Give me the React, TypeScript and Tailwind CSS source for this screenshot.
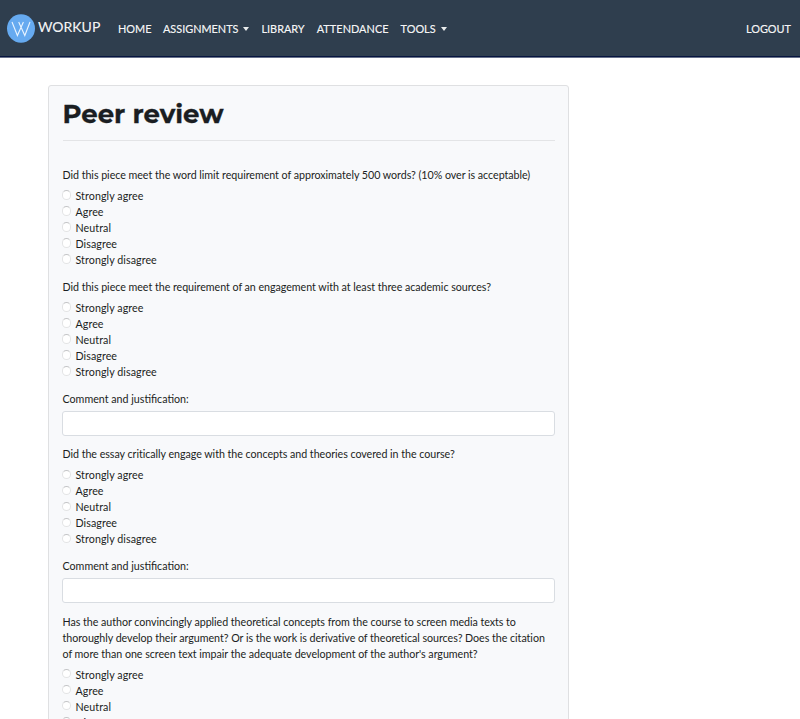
const OPTIONS = ["Strongly agree", "Agree", "Neutral", "Disagree", "Strongly disagree"];

function Caret() {
  return <span className="ml-[5px] inline-block border-x-[3.5px] border-t-[4px] border-x-transparent border-t-white/90 align-[2px]" />;
}

function Question({ lines }: { lines: string[] }) {
  return (
    <fieldset className="mb-[10.6px]">
      <div className="mb-[5px]">
        {lines.map((line) => (
          <p key={line} className="whitespace-nowrap leading-[16px] tracking-[-0.04px]">{line}</p>
        ))}
      </div>
      {OPTIONS.map((option) => (
        <label key={option} className="flex h-[16.05px] items-start leading-[16px] tracking-[0.07px]">
          <span className="-ml-[1px] mr-[4.6px] mt-[2.3px] h-[9.4px] w-[9.4px] shrink-0 rounded-full border border-[#e3e4e5] border-t-[#c4c5c7] bg-white" />
          {option}
        </label>
      ))}
    </fieldset>
  );
}

function Comment() {
  return (
    <div className="mb-[10.6px]">
      <p className="mb-[4px] leading-[16px]">Comment and justification:</p>
      <div className="-ml-[0.5px] h-[25px] rounded-[3px] border border-[#d9dde2] bg-white" />
    </div>
  );
}

export default function App() {
  return (
    <div className="h-[719px] w-[800px] overflow-hidden bg-white font-[Lato,sans-serif] text-[10.7px] text-[#1b1e22]">
      <nav className="flex h-[58px] items-center border-b border-[#68718a] bg-[#2f3e4e] pl-[7px] pr-[9px] text-[10.9px] text-white/95 shadow-[inset_0_-1px_0_#06153f]">
        <svg width="28" height="29" viewBox="0 0 28 29" fill="none">
          <ellipse cx="14" cy="14.5" rx="14" ry="14.3" fill="#66aaf0" />
          <path d="M5 8 10.4 21.5 16.4 8M11.7 8 17.8 21.5 23 8" stroke="#e9f4ff" strokeWidth="1.1" />
        </svg>
        <span className="mb-[3px] ml-[3px] w-[80px] text-[14px] leading-5 [-webkit-text-stroke:0.15px]">WORKUP</span>
        <div className="flex gap-[12px] leading-4 [-webkit-text-stroke:0.2px]">
          <span>HOME</span>
          <span className="-ml-[0.5px]">ASSIGNMENTS<Caret /></span>
          <span>LIBRARY</span>
          <span className="tracking-[0.05px]">ATTENDANCE</span>
          <span>TOOLS<Caret /></span>
        </div>
        <span className="ml-auto leading-4 [-webkit-text-stroke:0.2px]">LOGOUT</span>
      </nav>
      <main className="ml-[48px] mt-[27px] h-[700px] w-[521px] rounded-[3px] border border-[#dfe0e2] bg-[#f8f9fb] px-[13.5px] pt-[12px]">
        <h1 className="h-[43px] border-b border-[#e3e4e6] font-[Montserrat,Inter,sans-serif] text-[26px] font-bold leading-8 [-webkit-text-stroke:0.3px]">Peer review</h1>
        <div className="pt-[26px]">
          <Question lines={["Did this piece meet the word limit requirement of approximately 500 words? (10% over is acceptable)"]} />
          <Question lines={["Did this piece meet the requirement of an engagement with at least three academic sources?"]} />
          <Comment />
          <Question lines={["Did the essay critically engage with the concepts and theories covered in the course?"]} />
          <Comment />
          <Question
            lines={[
              "Has the author convincingly applied theoretical concepts from the course to screen media texts to",
              "thoroughly develop their argument? Or is the work is derivative of theoretical sources? Does the citation",
              "of more than one screen text impair the adequate development of the author's argument?",
            ]}
          />
        </div>
      </main>
    </div>
  );
}
